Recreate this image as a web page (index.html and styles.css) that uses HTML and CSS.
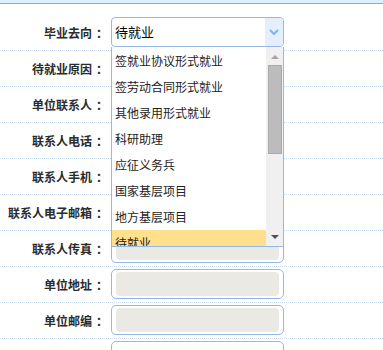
FILE: index.html
```html
<!DOCTYPE html>
<html lang="zh-CN">
<head>
<meta charset="utf-8">
<title>毕业去向</title>
<link rel="stylesheet" href="styles.css">
</head>
<body>
<div class="topbar"></div>
<div class="form">
  <div class="row">
    <div class="label">毕业去向<span class="colon">：</span></div>
    <div class="field">
      <div class="select">
        <div class="select-value">待就业</div>
        <div class="select-arrow">
          <svg width="10" height="6" viewBox="0 0 10 6"><path d="M1 1 L5 5 L9 1" fill="none" stroke="#7ab6ea" stroke-width="2"/></svg>
        </div>
      </div>
      <div class="dropdown">
        <div class="options">
          <div class="option">签就业协议形式就业</div>
          <div class="option">签劳动合同形式就业</div>
          <div class="option">其他录用形式就业</div>
          <div class="option">科研助理</div>
          <div class="option">应征义务兵</div>
          <div class="option">国家基层项目</div>
          <div class="option">地方基层项目</div>
          <div class="option active">待就业</div>
        </div>
        <div class="scrollbar">
          <div class="sb-btn"><span class="tri-up"></span></div>
          <div class="sb-thumb"></div>
          <div class="sb-track"></div>
          <div class="sb-btn"><span class="tri-down"></span></div>
        </div>
      </div>
    </div>
  </div>
  <div class="row">
    <div class="label">待就业原因<span class="colon">：</span></div>
    <div class="field"><div class="input"><div class="input-fill"></div></div></div>
  </div>
  <div class="row">
    <div class="label">单位联系人<span class="colon">：</span></div>
    <div class="field"><div class="input"><div class="input-fill"></div></div></div>
  </div>
  <div class="row">
    <div class="label">联系人电话<span class="colon">：</span></div>
    <div class="field"><div class="input"><div class="input-fill"></div></div></div>
  </div>
  <div class="row">
    <div class="label">联系人手机<span class="colon">：</span></div>
    <div class="field"><div class="input"><div class="input-fill"></div></div></div>
  </div>
  <div class="row">
    <div class="label">联系人电子邮箱<span class="colon">：</span></div>
    <div class="field"><div class="input"><div class="input-fill"></div></div></div>
  </div>
  <div class="row">
    <div class="label">联系人传真<span class="colon">：</span></div>
    <div class="field"><div class="input"><div class="input-fill"></div></div></div>
  </div>
  <div class="row">
    <div class="label">单位地址<span class="colon">：</span></div>
    <div class="field"><div class="input"><div class="input-fill"></div></div></div>
  </div>
  <div class="row">
    <div class="label">单位邮编<span class="colon">：</span></div>
    <div class="field"><div class="input"><div class="input-fill"></div></div></div>
  </div>
  <div class="row">
    <div class="label"></div>
    <div class="field"><div class="input"></div></div>
  </div>
</div>
</body>
</html>
```
FILE: styles.css
```css
* {
  box-sizing: border-box;
}

html, body {
  margin: 0;
  padding: 0;
}

body {
  width: 383px;
  height: 350px;
  overflow: hidden;
  background: #ffffff;
  font-family: "Noto Sans CJK SC", "Noto Sans", sans-serif;
}

.topbar {
  height: 4px;
  background: #dcf0fb;
  border-bottom: 1px solid #86aee2;
}

.form {
  padding-top: 11px;
}

.row {
  display: flex;
  align-items: center;
  padding: 2px 0 3px;
  border-bottom: 1px dotted #c4daf1;
}

.label {
  width: 104px;
  margin-right: 7px;
  text-align: right;
  font-size: 12px;
  font-weight: bold;
  color: #2b2b2b;
  white-space: nowrap;
}

.colon {
  display: inline-block;
  width: 12px;
  padding-left: 4px;
  text-align: left;
  overflow: visible;
}

.field {
  position: relative;
  width: 173px;
  height: 30px;
}

.select {
  display: flex;
  height: 30px;
  border: 1px solid #95b8e7;
  border-radius: 4px;
  overflow: hidden;
  background: #ffffff;
}

.select-value {
  flex: 1;
  padding-left: 3px;
  font-size: 13px;
  line-height: 28px;
  color: #000000;
}

.select-arrow {
  width: 18px;
  display: flex;
  align-items: center;
  justify-content: center;
  background: #e5eefc;
}

.input {
  height: 30px;
  padding: 2px 4px;
  border: 1px solid #95b8e7;
  border-radius: 5px;
  background: #ffffff;
}

.input-fill {
  height: 100%;
  border-radius: 4px;
  background: #ebe9e3;
}

.dropdown {
  position: absolute;
  top: 30px;
  left: 0;
  z-index: 2;
  display: flex;
  width: 173px;
  height: 200px;
  border: 1px solid #95b8e7;
  border-top: none;
  background: #ffffff;
}

.options {
  flex: 1;
  padding-top: 1px;
  overflow: hidden;
}

.option {
  height: 26px;
  padding-left: 3px;
  font-size: 12px;
  line-height: 26px;
  color: #222222;
  white-space: nowrap;
}

.option.active {
  background: #ffe08c;
}

.scrollbar {
  display: flex;
  flex-direction: column;
  width: 17px;
  background: #f0f0f0;
}

.sb-btn {
  height: 18px;
  display: flex;
  align-items: center;
  justify-content: center;
}

.tri-up {
  width: 0;
  height: 0;
  margin-top: 2px;
  border-left: 4px solid transparent;
  border-right: 4px solid transparent;
  border-bottom: 4px solid #a3a3a3;
}

.tri-down {
  width: 0;
  height: 0;
  border-left: 4px solid transparent;
  border-right: 4px solid transparent;
  border-top: 4px solid #505050;
}

.sb-thumb {
  width: 14px;
  height: 89px;
  margin-left: 2px;
  background: #bcbcbc;
  border: 1px solid #a9a9a9;
}

.sb-track {
  flex: 1;
}
```
